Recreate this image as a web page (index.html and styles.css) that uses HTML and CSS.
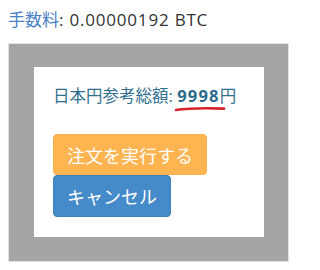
FILE: index.html
```html
<!DOCTYPE html>
<html lang="ja">
<head>
<meta charset="utf-8">
<link rel="stylesheet" href="styles.css">
</head>
<body>
<div class="fee"><span class="fee-label">手数料</span><span class="fee-value">: 0.00000192 BTC</span></div>
<div class="overlay">
  <div class="dialog">
    <div class="total">日本円参考総額: <span class="amount">9998<svg class="underline" viewBox="0 0 52 6" width="52" height="6"><path d="M2 4 C 14 2.2, 32 2, 50 2.6" fill="none" stroke="#d7212b" stroke-width="2.6" stroke-linecap="round"/></svg></span>円</div>
    <div class="actions">
      <button class="btn btn-exec">注文を実行する</button>
      <button class="btn btn-cancel">キャンセル</button>
    </div>
  </div>
</div>
</body>
</html>
```
FILE: styles.css
```css
body {
  margin: 8px;
  font-family: "Open Sans", "Noto Sans CJK JP", sans-serif;
  color: #333;
  background: #fff;
}
.fee {
  font-size: 17px;
  line-height: 24px;
  margin-bottom: 11px;
}
.fee-label {
  color: #4a7fc6;
}
.fee-value {
  letter-spacing: 0.8px;
}
.overlay {
  width: 230px;
  background: #a5a5a5;
  border: 1px solid #e2e2e2;
  padding: 23px 24px 24px 25px;
}
.dialog {
  background: #fff;
  height: 170px;
  box-sizing: border-box;
  padding: 17px 19px 19px 19px;
}
.total {
  font-size: 16.5px;
  line-height: 24px;
  color: #31708f;
  margin-bottom: 26px;
}
.amount {
  position: relative;
  font-weight: bold;
  color: #2b6a8d;
  letter-spacing: 1.2px;
}
.underline {
  position: absolute;
  left: -3px;
  top: 22px;
}
.actions {
  display: flex;
  flex-direction: column;
  align-items: flex-start;
}
.btn {
  font-family: "Open Sans", "Noto Sans CJK JP", sans-serif;
  font-size: 18px;
  color: #fff;
  border-radius: 4px;
  padding: 0 13px;
  cursor: pointer;
}
.btn-exec {
  height: 41px;
  background: #fdb451;
  border: 1px solid #fbb04d;
}
.btn-cancel {
  height: 42px;
  background: #458bca;
  border: 1px solid #3c81bd;
}
```
